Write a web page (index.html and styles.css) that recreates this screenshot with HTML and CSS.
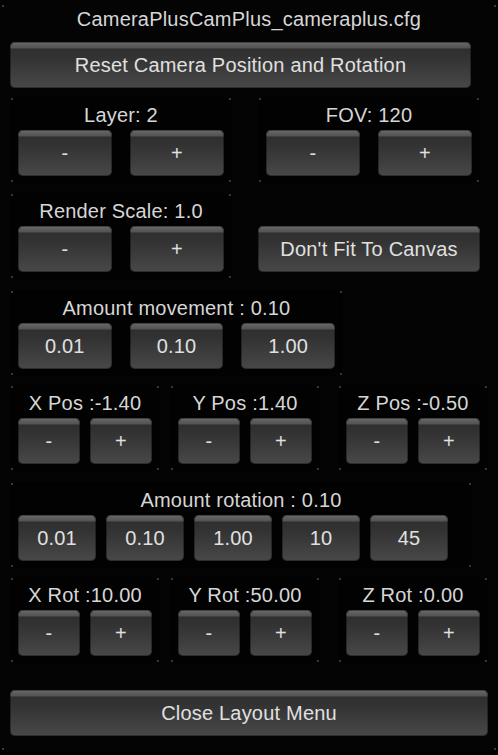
FILE: index.html
```html
<!DOCTYPE html>
<html>
<head>
<meta charset="utf-8">
<link rel="stylesheet" href="styles.css">
</head>
<body>
<div class="window">
  <div class="title">CameraPlusCamPlus_cameraplus.cfg</div>
  <div class="btn reset">Reset Camera Position and Rotation</div>

  <div class="row row1">
    <div class="group g-half">
      <div class="label">Layer: 2</div>
      <div class="btns"><div class="btn b94">-</div><div class="btn b94">+</div></div>
    </div>
    <div class="group g-half right-col">
      <div class="label">FOV: 120</div>
      <div class="btns"><div class="btn b94">-</div><div class="btn b94">+</div></div>
    </div>
  </div>

  <div class="row row2">
    <div class="group g-half">
      <div class="label">Render Scale: 1.0</div>
      <div class="btns"><div class="btn b94">-</div><div class="btn b94">+</div></div>
    </div>
    <div class="btn fit right-col">Don't Fit To Canvas</div>
  </div>

  <div class="row row3">
    <div class="group g-move">
      <div class="label">Amount movement : 0.10</div>
      <div class="btns"><div class="btn b94">0.01</div><div class="btn b94">0.10</div><div class="btn b94">1.00</div></div>
    </div>
  </div>

  <div class="row row4">
    <div class="group g-axis">
      <div class="label">X Pos :-1.40</div>
      <div class="btns small"><div class="btn b62">-</div><div class="btn b62">+</div></div>
    </div>
    <div class="group g-axis gy">
      <div class="label">Y Pos :1.40</div>
      <div class="btns small"><div class="btn b62">-</div><div class="btn b62">+</div></div>
    </div>
    <div class="group g-axis gz">
      <div class="label">Z Pos :-0.50</div>
      <div class="btns small"><div class="btn b62">-</div><div class="btn b62">+</div></div>
    </div>
  </div>

  <div class="row row5">
    <div class="group g-rot">
      <div class="label">Amount rotation : 0.10</div>
      <div class="btns small"><div class="btn b78">0.01</div><div class="btn b78">0.10</div><div class="btn b78">1.00</div><div class="btn b78">10</div><div class="btn b78">45</div></div>
    </div>
  </div>

  <div class="row row6">
    <div class="group g-axis">
      <div class="label">X Rot :10.00</div>
      <div class="btns small"><div class="btn b62">-</div><div class="btn b62">+</div></div>
    </div>
    <div class="group g-axis gy">
      <div class="label">Y Rot :50.00</div>
      <div class="btns small"><div class="btn b62">-</div><div class="btn b62">+</div></div>
    </div>
    <div class="group g-axis gz">
      <div class="label">Z Rot :0.00</div>
      <div class="btns small"><div class="btn b62">-</div><div class="btn b62">+</div></div>
    </div>
  </div>

  <div class="btn close">Close Layout Menu</div>
</div>
</body>
</html>
```
FILE: styles.css
```css
html, body {
  margin: 0;
  padding: 0;
  background: #000;
}
body {
  font-family: "Liberation Sans", Arial, sans-serif;
  font-size: 20px;
  letter-spacing: 0.2px;
  color: #d6d6d6;
}
.window {
  width: 498px;
  height: 752px;
  box-sizing: border-box;
  background-color: #040404;
  background-image:
    linear-gradient(#3c3c3c, #3c3c3c),
    linear-gradient(#3c3c3c, #3c3c3c),
    linear-gradient(#3c3c3c, #3c3c3c),
    linear-gradient(#3c3c3c, #3c3c3c);
  background-size: 2px 2px;
  background-repeat: no-repeat;
  background-position: 2px 5px, right 2px top 5px, left 2px bottom 2px, right 2px bottom 2px;
  display: flex;
  flex-direction: column;
  align-items: flex-start;
}
.title {
  width: 100%;
  height: 42px;
  line-height: 38px;
  text-align: center;
}
.btn {
  box-sizing: border-box;
  height: 46px;
  display: flex;
  align-items: center;
  justify-content: center;
  border-radius: 5px;
  color: #e0e0e0;
  background: linear-gradient(#6a6a6a 0, #5e5e5e 3px, #535353 6px, #2f2f2f 7px, #333 35%, #484848 100%);
  box-shadow: inset 0 0 0 1px rgba(0, 0, 0, 0.35);
  white-space: nowrap;
}
.reset {
  margin-left: 10px;
  width: 461px;
}
.row {
  display: flex;
  align-items: flex-start;
  margin-left: 10px;
}
.row1 { margin-top: 9px; }
.row2 { margin-top: 10px; }
.row3 { margin-top: 11px; }
.row4 { margin-top: 9px; }
.row5 { margin-top: 11px; }
.row6 { margin-top: 9px; }
.right-col { margin-left: 26px; }
.group {
  box-sizing: border-box;
  height: 86px;
  padding: 0 8px;
  background-color: #020202;
  background-image:
    linear-gradient(#383838, #383838),
    linear-gradient(#383838, #383838),
    linear-gradient(#383838, #383838),
    linear-gradient(#383838, #383838);
  background-size: 2px 2px;
  background-repeat: no-repeat;
  background-position: 1px 1px, right 1px top 1px, left 1px bottom 1px, right 1px bottom 1px;
}
.label {
  box-sizing: border-box;
  height: 33px;
  padding-top: 7px;
  line-height: 23px;
  text-align: center;
  white-space: nowrap;
}
.btns {
  display: flex;
  gap: 18px;
}
.btns.small { gap: 10px; }
.g-half { width: 222px; }
.g-move { width: 333px; }
.g-axis { width: 150px; }
.gy { margin-left: 10px; }
.gz { margin-left: 18px; }
.g-rot { width: 462px; }
.b94 { width: 94px; }
.b62 { width: 62px; }
.b78 { width: 78px; }
.fit {
  width: 222px;
  margin-top: 33px;
}
.close {
  margin-top: 27px;
  margin-left: 10px;
  width: 478px;
}
```
